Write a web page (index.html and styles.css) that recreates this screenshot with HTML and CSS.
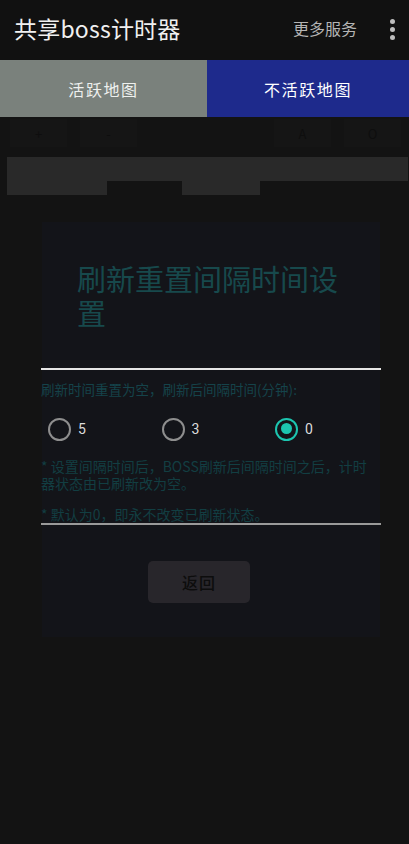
FILE: index.html
```html
<!DOCTYPE html>
<html lang="zh">
<head>
<meta charset="utf-8">
<link rel="stylesheet" href="styles.css">
</head>
<body>
<header class="appbar">
  <div class="title">共享boss计时器</div>
  <div class="more">更多服务</div>
  <div class="kebab"><span></span><span></span><span></span></div>
</header>
<nav class="tabs">
  <div class="tab tab-active">活跃地图</div>
  <div class="tab tab-inactive">不活跃地图</div>
</nav>
<div class="ghost-row">
  <div class="cell">+</div>
  <div class="cell">-</div>
  <div class="cell wide"></div>
  <div class="cell">A</div>
  <div class="cell">O</div>
</div>
<div class="ghost-block">
  <div class="gb-bar"></div>
  <div class="gb-tabs"><div class="gb-t1"></div><div class="gb-t2"></div></div>
</div>
<section class="dialog">
  <h1 class="d-title">刷新重置间隔时间设置</h1>
  <div class="d-line"></div>
  <p class="d-label">刷新时间重置为空，刷新后间隔时间(分钟):</p>
  <div class="radios">
    <div class="radio"><span class="circle"></span><span class="rl">5</span></div>
    <div class="radio"><span class="circle"></span><span class="rl">3</span></div>
    <div class="radio"><span class="circle checked"></span><span class="rl">0</span></div>
  </div>
  <p class="note">* 设置间隔时间后，BOSS刷新后间隔时间之后，计时器状态由已刷新改为空。</p>
  <p class="note note2">* 默认为0，即永不改变已刷新状态。</p>
  <div class="d-line thin"></div>
  <div class="btn-wrap"><div class="btn">返回</div></div>
</section>
</body>
</html>
```
FILE: styles.css
```css
* { box-sizing: border-box; }
html, body { margin: 0; padding: 0; }
body {
  width: 409px;
  height: 844px;
  background: #131313;
  font-family: "Noto Sans CJK SC", "Noto Sans", Roboto, sans-serif;
  overflow: hidden;
}
.appbar {
  height: 60px;
  background: #111111;
  display: flex;
  align-items: center;
  padding: 0 0 5px 14px;
}
.title {
  color: #f0f0f0;
  font-size: 23px;
  font-weight: 400;
  flex: 1;
  letter-spacing: 0.2px;
}
.more {
  color: #b5b5b5;
  font-size: 16px;
  margin-right: 27px;
}
.kebab {
  width: 16px;
  display: flex;
  flex-direction: column;
  align-items: center;
  gap: 3px;
  margin-right: 9px;
  margin-top: 4px;
}
.kebab span {
  width: 5px;
  height: 5px;
  border-radius: 50%;
  background: #bdbdbd;
}
.tabs {
  display: flex;
  height: 57px;
}
.tab {
  display: flex;
  align-items: center;
  justify-content: center;
  font-size: 16px;
  letter-spacing: 1.6px;
}
.tab-active {
  width: 207px;
  background: #7a817c;
  color: #eef0ee;
}
.tab-inactive {
  flex: 1;
  background: #1e2a8c;
  color: #ffffff;
}
.ghost-row {
  display: flex;
  height: 31px;
  padding: 2px 8px 0 10px;
  gap: 13px;
}
.cell {
  width: 57px;
  height: 28px;
  background: #151515;
  color: #0e0e0e;
  font-size: 13px;
  display: flex;
  align-items: center;
  justify-content: center;
}
.cell.wide { flex: 1; background: #131313; }
.ghost-block {
  margin: 9px 1px 0 7px;
}
.gb-bar {
  height: 24px;
  background: #292929;
}
.gb-tabs {
  display: flex;
  height: 14px;
}
.gb-t1 { width: 100px; background: #292929; }
.gb-t2 { width: 78px; margin-left: 75px; background: #292929; }
.dialog {
  margin: 27px 29px 0 42px;
  height: 415px;
  background: #131419;
  padding: 39px 0 0 0;
}
.d-title {
  margin: 0 0 0 35px;
  width: 275px;
  font-size: 29px;
  line-height: 34px;
  font-weight: 400;
  color: #17494c;
}
.d-line {
  margin: 39px -1px 0 -1px;
  height: 2px;
  background: #e6e6e6;
}
.d-line.thin {
  margin-top: 0;
  height: 1.5px;
  background: #9a9a9a;
}
.d-label {
  margin: 10px 0 0 -1px;
  font-size: 13.5px;
  line-height: 18px;
  color: #15434a;
}
.radios {
  display: flex;
  margin: 19px 0 0 6px;
  height: 24px;
}
.radio {
  flex: 0 0 113.5px;
  display: flex;
  align-items: center;
}
.circle {
  flex: 0 0 23px;
  width: 23px;
  height: 23px;
  border-radius: 50%;
  border: 2.5px solid #8e8e8e;
  display: inline-block;
  position: relative;
}
.circle.checked {
  border-color: #1cc5af;
}
.circle.checked::after {
  content: "";
  position: absolute;
  left: 3.5px;
  top: 3.5px;
  width: 11px;
  height: 11px;
  border-radius: 50%;
  background: #1cc5af;
}
.rl {
  color: #dcdcdc;
  font-size: 14px;
  margin-left: 7px;
  font-family: Roboto, "Noto Sans", sans-serif;
}
.note {
  margin: 17px 0 0 -1px;
  font-size: 14px;
  line-height: 17px;
  color: #123e42;
}
.note2 {
  margin-top: 14px;
}
.btn-wrap {
  display: flex;
  margin: 36px 0 0 106px;
}
.btn {
  width: 102px;
  height: 42px;
  border-radius: 5px;
  background: #28262b;
  color: #0d0d0d;
  font-size: 16px;
  font-weight: 500;
  letter-spacing: 1px;
  display: flex;
  align-items: center;
  justify-content: center;
}
```
